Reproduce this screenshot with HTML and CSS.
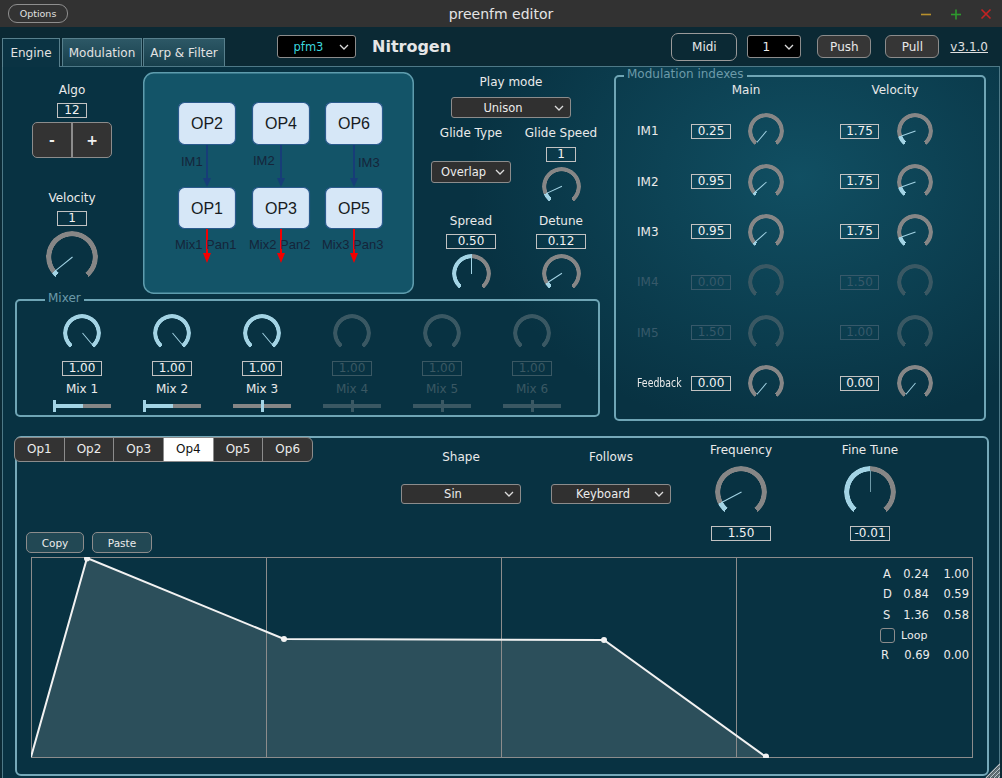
FILE: index.html
```html
<!DOCTYPE html>
<html>
<head>
<meta charset="utf-8">
<title>preenfm editor</title>
<link rel="stylesheet" href="styles.css">
</head>
<body>
<div class="app">
  <header class="titlebar">
    <div class="tb-left"><button class="opt-btn">Options</button></div>
    <div class="title">preenfm editor</div>
    <div class="winctl">
      <svg width="12" height="12" viewBox="0 0 12 12"><line x1="1" y1="6.5" x2="11" y2="6.5" stroke="#b8902c" stroke-width="1.6"/></svg>
      <svg width="12" height="12" viewBox="0 0 12 12"><line x1="1" y1="6.5" x2="11" y2="6.5" stroke="#2e9a2e" stroke-width="1.6"/><line x1="6" y1="1.5" x2="6" y2="11.5" stroke="#2e9a2e" stroke-width="1.6"/></svg>
      <svg width="12" height="12" viewBox="0 0 12 12"><line x1="1.5" y1="1.5" x2="10.5" y2="10.5" stroke="#c42222" stroke-width="1.6"/><line x1="10.5" y1="1.5" x2="1.5" y2="10.5" stroke="#c42222" stroke-width="1.6"/></svg>
    </div>
  </header>

  <nav class="toolbar">
    <div class="tabs">
      <div class="tab active">Engine</div>
      <div class="tab tab-mod">Modulation</div>
      <div class="tab tab-arp">Arp &amp; Filter</div>
    </div>
    <div class="select sel-black sel-pfm"><span class="sel-text cyan">pfm3</span><svg class="chev" width="10" height="6" viewBox="0 0 10 6"><polyline points="1,1 5,5 9,1"/></svg></div>
    <div class="preset-name">Nitrogen</div>
    <button class="btn btn-midi">Midi</button>
    <div class="select sel-black sel-ch"><span class="sel-text">1</span><svg class="chev" width="10" height="6" viewBox="0 0 10 6"><polyline points="1,1 5,5 9,1"/></svg></div>
    <button class="btn btn-dark btn-push">Push</button>
    <button class="btn btn-dark btn-pull">Pull</button>
    <span class="version">v3.1.0</span>
  </nav>

  <main class="panel">
    <section class="upper">
      <div class="left">
        <div class="row1">
          <div class="algo-col">
            <div class="lbl algo-lbl">Algo</div>
            <div class="vbox w30 mt5">12</div>
            <div class="pm-btns"><span class="pm">-</span><span class="pm-sep"></span><span class="pm">+</span></div>
            <div class="lbl vel-lbl">Velocity</div>
            <div class="vbox w30 mt5">1</div>
            <div class="knob k52 mt5" style="--v:.04"></div>
          </div>

          <svg class="algo" width="271" height="222" viewBox="0 0 271 222">
            <rect x="0.75" y="0.75" width="269.5" height="220.5" rx="10" fill="#135468" stroke="#5e9cad" stroke-width="1.5"/>
            <g fill="#d6e7f7" stroke="#2a5a8c" stroke-width="1.2">
              <rect x="35.5" y="30.5" width="57" height="42" rx="6"/>
              <rect x="109.5" y="30.5" width="57" height="42" rx="6"/>
              <rect x="182.5" y="30.5" width="57" height="42" rx="6"/>
              <rect x="35.5" y="115.5" width="57" height="41" rx="6"/>
              <rect x="109.5" y="115.5" width="57" height="41" rx="6"/>
              <rect x="182.5" y="115.5" width="57" height="41" rx="6"/>
            </g>
            <g stroke="#173d78" stroke-width="2">
              <line x1="64" y1="73" x2="64" y2="108"/>
              <line x1="138" y1="73" x2="138" y2="108"/>
              <line x1="211" y1="73" x2="211" y2="108"/>
            </g>
            <g fill="#173d78">
              <polygon points="60,106 68,106 64,115"/>
              <polygon points="134,106 142,106 138,115"/>
              <polygon points="207,106 215,106 211,115"/>
            </g>
            <g stroke="#f20000" stroke-width="2">
              <line x1="64" y1="157" x2="64" y2="183"/>
              <line x1="138" y1="157" x2="138" y2="183"/>
              <line x1="211" y1="157" x2="211" y2="183"/>
            </g>
            <g fill="#f20000">
              <polygon points="60,181 68,181 64,191"/>
              <polygon points="134,181 142,181 138,191"/>
              <polygon points="207,181 215,181 211,191"/>
            </g>
            <g class="op-txt" text-anchor="middle">
              <text x="64" y="57">OP2</text>
              <text x="138" y="57">OP4</text>
              <text x="211" y="57">OP6</text>
              <text x="64" y="142">OP1</text>
              <text x="138" y="142">OP3</text>
              <text x="211" y="142">OP5</text>
            </g>
            <g class="im-txt">
              <text x="38" y="94">IM1</text>
              <text x="110" y="93">IM2</text>
              <text x="215" y="95">IM3</text>
              <text x="32" y="177">Mix1 Pan1</text>
              <text x="106" y="177">Mix2 Pan2</text>
              <text x="179" y="177">Mix3 Pan3</text>
            </g>
          </svg>

          <div class="play-col">
            <div class="lbl mt7">Play mode</div>
            <div class="select sel-dark sel-unison mt7"><span class="sel-text">Unison</span><svg class="chev" width="10" height="6" viewBox="0 0 10 6"><polyline points="1,1 5,5 9,1"/></svg></div>
            <div class="play-grid">
              <div class="pcell">
                <div class="lbl">Glide Type</div>
                <div class="select sel-dark sel-overlap"><span class="sel-text">Overlap</span><svg class="chev" width="10" height="6" viewBox="0 0 10 6"><polyline points="1,1 5,5 9,1"/></svg></div>
              </div>
              <div class="pcell">
                <div class="lbl">Glide Speed</div>
                <div class="vbox w30 mt6">1</div>
                <div class="knob k39 mt5" style="--v:.09"></div>
              </div>
              <div class="pcell">
                <div class="lbl mt6">Spread</div>
                <div class="vbox w50 mt5">0.50</div>
                <div class="knob k39 mt5" style="--v:.5"></div>
              </div>
              <div class="pcell">
                <div class="lbl mt6">Detune</div>
                <div class="vbox w50 mt5">0.12</div>
                <div class="knob k39 mt5" style="--v:.06"></div>
              </div>
            </div>
          </div>
        </div>

        <fieldset class="group mixer">
          <legend>Mixer</legend>
          <div class="mix-grid">
            <div class="mix-ch">
              <div class="knob k38" style="--v:1"></div>
              <div class="vbox w40">1.00</div>
              <div class="lbl mix-lbl">Mix 1</div>
              <div class="hslider" style="--p:0;--f:.52"><span class="fill"></span><span class="thumb"></span></div>
            </div>
            <div class="mix-ch">
              <div class="knob k38" style="--v:1"></div>
              <div class="vbox w40">1.00</div>
              <div class="lbl mix-lbl">Mix 2</div>
              <div class="hslider" style="--p:0;--f:.52"><span class="fill"></span><span class="thumb"></span></div>
            </div>
            <div class="mix-ch">
              <div class="knob k38" style="--v:1"></div>
              <div class="vbox w40">1.00</div>
              <div class="lbl mix-lbl">Mix 3</div>
              <div class="hslider" style="--p:.5;--f:0"><span class="fill"></span><span class="thumb"></span></div>
            </div>
            <div class="mix-ch off">
              <div class="knob k38 off"></div>
              <div class="vbox w40">1.00</div>
              <div class="lbl mix-lbl">Mix 4</div>
              <div class="hslider" style="--p:.5;--f:0"><span class="fill"></span><span class="thumb"></span></div>
            </div>
            <div class="mix-ch off">
              <div class="knob k38 off"></div>
              <div class="vbox w40">1.00</div>
              <div class="lbl mix-lbl">Mix 5</div>
              <div class="hslider" style="--p:.5;--f:0"><span class="fill"></span><span class="thumb"></span></div>
            </div>
            <div class="mix-ch off">
              <div class="knob k38 off"></div>
              <div class="vbox w40">1.00</div>
              <div class="lbl mix-lbl">Mix 6</div>
              <div class="hslider" style="--p:.5;--f:0"><span class="fill"></span><span class="thumb"></span></div>
            </div>
          </div>
        </fieldset>
      </div>

      <fieldset class="group modidx">
        <legend>Modulation indexes</legend>
        <div class="im-head"><span class="h-main">Main</span><span class="h-vel">Velocity</span></div>
        <div class="im-row"><span class="im-lbl">IM1</span><span class="vbox w40">0.25</span><div class="knob k36 kmain" style="--v:0"></div><span class="vbox w39 vvel">1.75</span><div class="knob k36 kvel" style="--v:.11"></div></div>
        <div class="im-row"><span class="im-lbl">IM2</span><span class="vbox w40">0.95</span><div class="knob k36 kmain" style="--v:.03"></div><span class="vbox w39 vvel">1.75</span><div class="knob k36 kvel" style="--v:.11"></div></div>
        <div class="im-row"><span class="im-lbl">IM3</span><span class="vbox w40">0.95</span><div class="knob k36 kmain" style="--v:.03"></div><span class="vbox w39 vvel">1.75</span><div class="knob k36 kvel" style="--v:.11"></div></div>
        <div class="im-row off"><span class="im-lbl">IM4</span><span class="vbox w40">0.00</span><div class="knob k36 kmain off"></div><span class="vbox w39 vvel">1.50</span><div class="knob k36 kvel off"></div></div>
        <div class="im-row off"><span class="im-lbl">IM5</span><span class="vbox w40">1.50</span><div class="knob k36 kmain off"></div><span class="vbox w39 vvel">1.00</span><div class="knob k36 kvel off"></div></div>
        <div class="im-row"><span class="im-lbl fb">Feedback</span><span class="vbox w40">0.00</span><div class="knob k36 kmain" style="--v:0"></div><span class="vbox w39 vvel">0.00</span><div class="knob k36 kvel" style="--v:0"></div></div>
      </fieldset>
    </section>

    <section class="opframe">
      <div class="op-top">
        <div class="op-left">
          <div class="optabs">
            <span class="optab">Op1</span><span class="optab">Op2</span><span class="optab">Op3</span><span class="optab sel">Op4</span><span class="optab">Op5</span><span class="optab">Op6</span>
          </div>
          <div class="cp-row">
            <button class="cp-btn">Copy</button>
            <button class="cp-btn">Paste</button>
          </div>
        </div>
        <div class="ocol ocol-shape">
          <div class="lbl">Shape</div>
          <div class="select sel-dark sel-wide"><span class="sel-text">Sin</span><svg class="chev" width="10" height="6" viewBox="0 0 10 6"><polyline points="1,1 5,5 9,1"/></svg></div>
        </div>
        <div class="ocol ocol-follows">
          <div class="lbl">Follows</div>
          <div class="select sel-dark sel-wide"><span class="sel-text">Keyboard</span><svg class="chev" width="10" height="6" viewBox="0 0 10 6"><polyline points="1,1 5,5 9,1"/></svg></div>
        </div>
        <div class="ocol ocol-freq">
          <div class="lbl">Frequency</div>
          <div class="knob k52 mt8" style="--v:.08"></div>
          <div class="vbox w60 mt8">1.50</div>
        </div>
        <div class="ocol ocol-fine">
          <div class="lbl">Fine Tune</div>
          <div class="knob k52 kfine mt8" style="--v:.5"></div>
          <div class="vbox w40 mt8">-0.01</div>
        </div>
      </div>

      <div class="env">
        <svg width="942" height="201" viewBox="0 0 942 201">
          <polygon points="0,200 56,1 253,82 573,83 735,200" fill="#2c4f5b"/>
          <g stroke="#8c8c8c" stroke-width="1">
            <rect x="0.5" y="0.5" width="941" height="200" fill="none"/>
            <line x1="235.5" y1="0" x2="235.5" y2="201"/>
            <line x1="470.5" y1="0" x2="470.5" y2="201"/>
            <line x1="705.5" y1="0" x2="705.5" y2="201"/>
          </g>
          <polyline points="0,200 56,1 253,82 573,83 735,200" fill="none" stroke="#f2f2f2" stroke-width="2"/>
          <g fill="#f2f2f2">
            <circle cx="56" cy="1.5" r="3"/>
            <circle cx="253" cy="82" r="3"/>
            <circle cx="573" cy="83" r="3"/>
            <circle cx="735" cy="199.5" r="3"/>
          </g>
        </svg>
        <div class="adsr">
          <span>A</span><span class="c">0.24</span><span class="r">1.00</span>
          <span>D</span><span class="c">0.84</span><span class="r">0.59</span>
          <span>S</span><span class="c">1.36</span><span class="r">0.58</span>
          <span class="chk"></span><span class="loop">Loop</span>
          <span>R</span><span class="c">0.69</span><span class="r">0.00</span>
        </div>
      </div>
    </section>

    <svg class="grip" width="16" height="16" viewBox="0 0 16 16">
      <g stroke="#c8c8c8" stroke-width="1.2">
        <line x1="16" y1="2" x2="2" y2="16"/>
        <line x1="16" y1="6" x2="6" y2="16"/>
        <line x1="16" y1="10" x2="10" y2="16"/>
        <line x1="16" y1="14" x2="14" y2="16"/>
      </g>
      <g stroke="#6f6f6f" stroke-width="1">
        <line x1="16" y1="4" x2="4" y2="16"/>
        <line x1="16" y1="8" x2="8" y2="16"/>
        <line x1="16" y1="12" x2="12" y2="16"/>
      </g>
    </svg>
  </main>
</div>
</body>
</html>
```

FILE: styles.css
```css
* { box-sizing: border-box; margin: 0; padding: 0; }

html, body {
  width: 1002px;
  height: 778px;
  overflow: hidden;
  background: #0b2a35;
}

body {
  font-family: "DejaVu Sans", Verdana, sans-serif;
  font-size: 12px;
  color: #e8e8e8;
}

button { font-family: inherit; color: inherit; cursor: default; }

/* ---------- title bar ---------- */
.titlebar {
  height: 27px;
  background: #323232;
  display: grid;
  grid-template-columns: 1fr auto 1fr;
  align-items: center;
}
.opt-btn {
  display: block;
  margin-left: 8px;
  width: 60px;
  height: 19px;
  border: 1px solid #8e8e8e;
  border-radius: 9px;
  background: #333;
  color: #e0e0e0;
  font-size: 9.5px;
  line-height: 17px;
}
.title { font-size: 14px; color: #e4e4e4; }
.winctl {
  justify-self: end;
  display: flex;
  align-items: center;
  gap: 18px;
  margin-right: 10px;
}
.winctl svg { display: block; }

/* ---------- toolbar ---------- */
.toolbar {
  height: 39px;
  display: flex;
  align-items: center;
  padding-right: 14px;
  background: #0b2934;
}
.tabs {
  align-self: flex-end;
  display: flex;
  margin-left: 2px;
  position: relative;
  z-index: 2;
}
.tab {
  height: 28px;
  line-height: 28px;
  text-align: center;
  border: 1px solid #58808d;
  border-bottom: 0;
  background: linear-gradient(#2d5866, #173f4c);
  color: #e2e2e2;
}
.tab.active {
  width: 58px;
  height: 29px;
  margin-bottom: -1px;
  background: #0a3343;
}
.tab-mod { width: 80px; margin-left: 2px; }
.tab-arp { width: 82px; margin-left: 1px; }

.select {
  display: flex;
  align-items: center;
  border: 1px solid #8c8c8c;
  border-radius: 3px;
  font-size: 11.5px;
  color: #ececec;
}
.sel-text { flex: 1; text-align: center; white-space: nowrap; }
.chev { flex: none; margin-right: 6px; fill: none; stroke: #dcdcdc; stroke-width: 1.3; }
.sel-black { background: #000; height: 23px; }
.sel-dark { background: #303030; }
.cyan { color: #3bd6df; }
.sel-pfm { width: 79px; margin-left: 52px; }
.preset-name {
  margin-left: 16px;
  font-size: 16px;
  font-weight: bold;
  color: #e6e6e6;
}
.btn {
  height: 23px;
  border: 1px solid #8c8c8c;
  border-radius: 6px;
  font-size: 12px;
}
.btn-midi {
  margin-left: auto;
  width: 66px;
  height: 28px;
  border-radius: 7px;
  background: transparent;
  border-color: #9a9a9a;
}
.sel-ch { width: 54px; margin-left: 10px; font-size: 12px; }
.btn-dark { width: 54px; background: #363636; }
.btn-push { margin-left: 16px; }
.btn-pull { margin-left: 14px; }
.version {
  margin-left: 11px;
  text-decoration: underline;
  color: #e0e0e0;
}

/* ---------- main panel ---------- */
.panel {
  position: relative;
  margin: 0 2px;
  height: 712px;
  border: 1px solid #4e7987;
  border-bottom: 0;
  background:
    radial-gradient(ellipse 330px 260px at 796px 110px, rgba(18, 84, 104, 0.85), rgba(8, 50, 66, 0)),
    #083242;
}
.grip {
  position: absolute;
  right: -1px;
  bottom: 0;
  display: block;
}

.upper { display: flex; align-items: flex-start; }
.left { width: 609px; flex: none; }
.row1 { display: flex; align-items: flex-start; height: 227px; }

.lbl { line-height: 16px; white-space: nowrap; color: #eaeaea; }
.mt5 { margin-top: 5px; }
.mt6 { margin-top: 6px; }
.mt7 { margin-top: 7px; }
.mt8 { margin-top: 8px; }

.vbox {
  display: block;
  flex: none;
  height: 15px;
  line-height: 13px;
  border: 1px solid #c2c2c2;
  text-align: center;
  font-size: 12px;
  color: #f2f2f2;
  white-space: nowrap;
}
.w30 { width: 30px; }
.w39 { width: 39px; }
.w40 { width: 40px; }
.w50 { width: 50px; }
.w60 { width: 60px; }

/* algo column */
.algo-col {
  width: 138px;
  flex: none;
  display: flex;
  flex-direction: column;
  align-items: center;
}
.algo-lbl { margin-top: 15px; }
.pm-btns {
  margin-top: 4px;
  width: 80px;
  height: 36px;
  display: flex;
  background: #333;
  border: 1px solid #8c8c8c;
  border-radius: 5px;
}
.pm {
  flex: 1;
  display: flex;
  align-items: center;
  justify-content: center;
  font-size: 14px;
  font-weight: bold;
  color: #f0f0f0;
}
.pm-sep { width: 2px; background: #8c8c8c; }
.vel-lbl { margin-top: 32px; }

.algo { display: block; flex: none; margin-left: 2px; margin-top: 5px; }
.op-txt text { font-family: "Liberation Sans", Arial, sans-serif; font-size: 16px; fill: #161b22; }
.im-txt text { font-family: "Liberation Sans", Arial, sans-serif; font-size: 13px; fill: #15253a; }

/* play column */
.play-col {
  width: 194px;
  flex: none;
  display: flex;
  flex-direction: column;
  align-items: center;
}
.sel-unison { width: 120px; height: 21px; }
.play-grid {
  align-self: flex-start;
  margin-top: 7px;
  display: grid;
  grid-template-columns: 114px 66px;
  grid-template-rows: 82px auto;
}
.pcell { display: flex; flex-direction: column; align-items: center; }
.sel-overlap { width: 80px; height: 22px; margin-top: 20px; }
.sel-overlap .chev { margin-right: 5px; }

/* ---------- knobs ---------- */
.knob {
  position: relative;
  flex: none;
  width: 36px;
  height: 36px;
  --v: 0;
  --w: 4px;
  --on: #a3d4e5;
  --track: #868686;
}
.knob::before {
  content: "";
  position: absolute;
  inset: 0;
  border-radius: 50%;
  background: conic-gradient(from 220deg,
      var(--on) calc(var(--v) * 280deg),
      var(--track) 0 280deg,
      transparent 0);
  -webkit-mask: radial-gradient(closest-side, transparent calc(100% - var(--w) - 0.6px), #000 calc(100% - var(--w)));
  mask: radial-gradient(closest-side, transparent calc(100% - var(--w) - 0.6px), #000 calc(100% - var(--w)));
}
.knob::after {
  content: "";
  position: absolute;
  left: calc(50% - 0.5px);
  bottom: 50%;
  width: 1px;
  height: calc(50% - var(--w) + 1px);
  background: #a3d4e5;
  transform-origin: 50% 100%;
  transform: rotate(calc(-140deg + var(--v) * 280deg));
}
.knob.off { --track: #3a5863; --on: #3a5863; }
.knob.off::after { display: none; }
.k52 { width: 52px; height: 52px; --w: 5px; }
.k39 { width: 39px; height: 39px; }
.k38 { width: 38px; height: 38px; }
.kfine::after { background: #6f9aa8; }

/* ---------- group boxes ---------- */
.group {
  border: 2px solid #6fa5b5;
  border-radius: 5px;
  min-width: 0;
}
.group legend {
  margin-left: 8px;
  padding: 0 3px 4px;
  line-height: 14px;
  font-size: 12px;
  color: #6c9aa9;
}

.mixer {
  margin-left: 12px;
  margin-top: -3px;
  width: 585px;
  padding: 5px 0 7px 20px;
}
.mix-grid { display: grid; grid-template-columns: repeat(6, 90px); }
.mix-ch { display: flex; flex-direction: column; align-items: center; }
.mix-ch .vbox { margin-top: 9px; }
.mix-lbl { margin-top: 5px; }
.hslider {
  position: relative;
  margin-top: 7px;
  width: 58px;
  height: 4px;
  background: #868686;
  --p: 0;
  --f: 0;
}
.hslider .fill {
  position: absolute;
  left: 0;
  top: 0;
  height: 4px;
  width: calc(var(--f) * 100%);
  background: #a3d4e5;
}
.hslider .thumb {
  position: absolute;
  top: -4px;
  left: max(0px, calc(var(--p) * 100% - 1px));
  width: 3px;
  height: 12px;
  background: #a3d4e5;
}
.mix-ch.off .lbl, .mix-ch.off .vbox { color: #3a5863; border-color: #3a5863; }
.mix-ch.off .hslider, .mix-ch.off .hslider .thumb { background: #3a5863; }

.modidx {
  margin-left: 2px;
  width: 372px;
  height: 354px;
  padding: 0;
}
.im-head { display: flex; height: 12px; line-height: 12px; margin-top: -1px; }
.im-head span { width: 60px; text-align: center; }
.h-main { margin-left: 100px; }
.h-vel { margin-left: 89px; }
.im-row {
  display: flex;
  align-items: center;
  height: 50.4px;
  padding-left: 21px;
}
.im-head + .im-row { margin-top: 10px; }
.im-lbl { width: 54px; flex: none; color: #eaeaea; white-space: nowrap; }
.im-lbl.fb { display: inline-block; transform: scaleX(0.78); transform-origin: 0 50%; }
.kmain { margin-left: 17px; }
.vvel { margin-left: 56px; }
.kvel { margin-left: 18px; }
.im-row.off .im-lbl, .im-row.off .vbox { color: #37596a; border-color: #37596a; }

/* ---------- operator frame ---------- */
.opframe {
  margin-left: 12px;
  margin-top: 15px;
  width: 974px;
  height: 340px;
  border: 2px solid #76a9b9;
  border-radius: 6px;
}
.op-top { display: flex; height: 115px; }
.op-left { width: 384px; flex: none; }
.optabs {
  display: flex;
  margin-left: -3px;
  margin-top: -1px;
  width: 299px;
  height: 25px;
  border: 1px solid #8c8c8c;
  border-radius: 6px;
  overflow: hidden;
  background: #333;
}
.optab {
  flex: 1;
  text-align: center;
  line-height: 23px;
  border-left: 1px solid #8c8c8c;
  color: #ececec;
}
.optab:first-child { border-left: 0; }
.optab.sel { background: #fff; color: #111; }
.cp-row { display: flex; gap: 8px; margin-left: 9px; margin-top: 70px; }
.cp-btn {
  height: 21px;
  border: 1px solid #8c8c8c;
  border-radius: 5px;
  background: #224854;
  font-size: 10.5px;
  color: #ececec;
}
.cp-btn:first-child { width: 58px; }
.cp-btn:last-child { width: 60px; }

.ocol { display: flex; flex-direction: column; align-items: center; flex: none; }
.ocol-shape { width: 120px; padding-top: 11px; }
.ocol-follows { width: 120px; margin-left: 30px; padding-top: 11px; }
.ocol-freq { width: 60px; margin-left: 40px; padding-top: 4px; }
.ocol-fine { width: 60px; margin-left: 69px; padding-top: 4px; }
.sel-wide { width: 120px; height: 20px; margin-top: 19px; }

.env {
  position: relative;
  margin-top: 4px;
  margin-left: 14px;
  width: 942px;
  height: 201px;
}
.env svg { display: block; }
.adsr {
  position: absolute;
  top: 7px;
  right: 4px;
  display: grid;
  grid-template-columns: 20px 30px 38px;
  grid-auto-rows: 20.3px;
  align-items: center;
  font-size: 11.5px;
  color: #ececec;
}
.adsr span { white-space: nowrap; }
.adsr span:nth-child(3n+1) { padding-left: 2px; }
.adsr .c { text-align: center; }
.adsr .r { text-align: right; }
.adsr .chk {
  width: 15px;
  height: 15px;
  padding: 0;
  border: 1px solid #8c8c8c;
  border-radius: 3px;
  margin-left: -1px;
}
.adsr .loop { grid-column: 2 / 4; font-size: 11px; }
```
